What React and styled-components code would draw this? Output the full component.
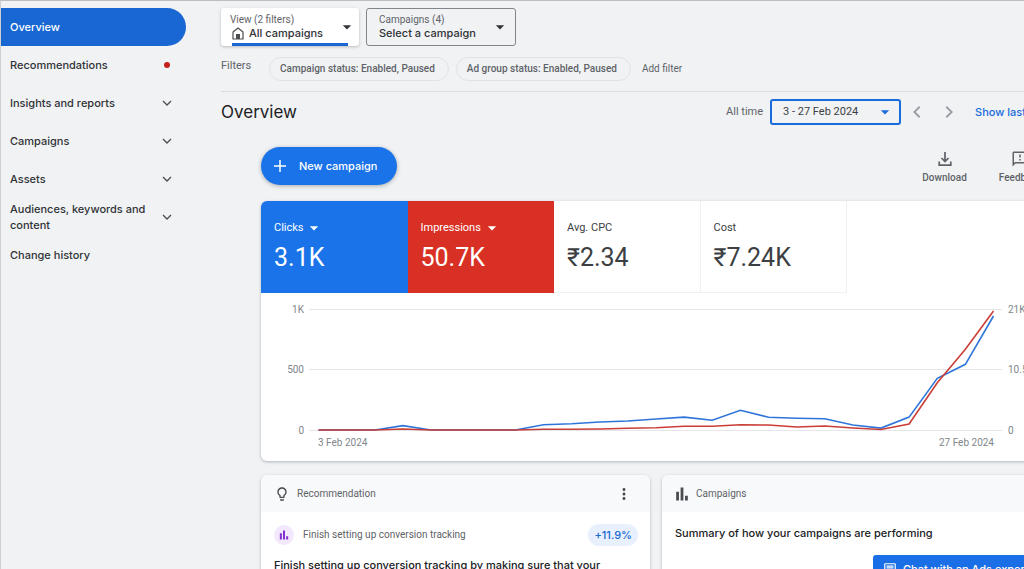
import React, { useState } from 'react';
import styled, { createGlobalStyle, css } from 'styled-components';
import {
  MdArrowDropDown,
  MdChevronLeft,
  MdChevronRight,
  MdLightbulbOutline,
  MdMoreVert,
  MdOutlineChat,
  MdOutlineFeedback,
} from 'react-icons/md';

const display = 'Inter, "Liberation Sans", sans-serif';
const text = 'Roboto, "Liberation Sans", sans-serif';

const GlobalStyle = createGlobalStyle`
  * {
    box-sizing: border-box;
  }
  body {
    margin: 0;
    background: #f0f2f4;
    color: #3c4043;
    font-family: ${text};
    font-size: 11px;
    line-height: 16px;
    overflow: hidden;
  }
  button, select {
    margin: 0;
    padding: 0;
    border: 0;
    background: none;
    color: inherit;
    font: inherit;
    text-align: left;
    appearance: none;
    cursor: pointer;
  }
  a {
    color: inherit;
    text-decoration: none;
  }
  h1, h2, p {
    margin: 0;
  }
  svg {
    display: block;
    flex: none;
  }
`;

const Page = styled.div`
  display: flex;
  height: 100vh;
  overflow: hidden;
  border-top: 1px solid #bdbec0;
  border-left: 1px solid #cfd0d2;
`;

/* Sidebar */

const Sidebar = styled.nav`
  flex: none;
  width: 220px;
  padding-top: 7px;
`;

const NavItem = styled.a`
  display: flex;
  align-items: center;
  justify-content: space-between;
  width: 185px;
  height: 38px;
  padding: 0 13px 0 9px;
  border-radius: 0 19px 19px 0;
  color: #303337;
  font-family: ${display};
  font-size: 11px;
  font-weight: 500;
  line-height: 16px;

  ${({ $active }) => $active && css`
    background: #1967d2;
    color: #fff;
  `}
`;

const NavLabel = styled.span`
  max-width: 142px;
`;

const Dot = styled.span`
  width: 6px;
  height: 6px;
  margin-right: 3px;
  border-radius: 50%;
  background: #c5221f;
`;

/* Scope pickers and filters */

const Main = styled.main`
  flex: 1;
  min-width: 0;
  margin-right: -67px;
`;

const ScopeBar = styled.div`
  display: flex;
  gap: 7px;
  padding-top: 7px;
`;

const ScopeBox = styled.div`
  display: flex;
  align-items: center;
  justify-content: space-between;
  width: ${({ $outlined }) => ($outlined ? 150 : 138)}px;
  height: 38px;
  padding: ${({ $outlined }) => ($outlined ? '0 5px 0 12px' : '0 2px 0 9px')};
  border-radius: 3px;
  color: #303337;
  ${({ $outlined }) => ($outlined
    ? css`border: 1px solid #80868b;`
    : css`
      background:
        linear-gradient(#1967d2, #1967d2) 11px 100% / 116px 3px no-repeat,
        #fff;
      box-shadow: 0 1px 3px rgba(60, 64, 67, 0.3);
    `)}
`;

const ScopeLabel = styled.label`
  display: block;
  color: #5f6368;
  font-size: 10px;
  line-height: 12px;
`;

const ScopeValue = styled.div`
  display: flex;
  align-items: center;
  gap: 5px;
  padding-left: ${({ $indent }) => ($indent ? 2 : 0)}px;
  font-family: ${display};
  font-weight: 500;
  line-height: 14px;
`;

const Filters = styled.div`
  display: flex;
  align-items: center;
  height: 46px;
  border-bottom: 1px solid #dadce0;
  color: #5f6368;
`;

const FiltersLabel = styled.span`
  width: 48px;
  padding-bottom: 6px;
`;

const Chip = styled.button`
  height: 24px;
  margin-right: 7px;
  padding: 0 13px 0 10px;
  border: 1px solid #e0e2e5;
  border-radius: 12px;
  font-size: 10px;
  font-weight: 500;
`;

const AddFilter = styled.button`
  padding-left: 4px;
  font-size: 10px;
`;

/* Heading row */

const Heading = styled.div`
  display: flex;
  align-items: center;
  justify-content: space-between;
  height: 39px;
  padding-right: 20px;
`;

const Title = styled.h1`
  color: #202124;
  font-family: ${display};
  font-size: 17px;
  font-weight: 400;
  line-height: 24px;
`;

const DateTools = styled.div`
  display: flex;
  align-items: center;
`;

const DateLabel = styled.label`
  margin-right: 7px;
  color: #5f6368;
`;

const DateBox = styled.div`
  display: flex;
  align-items: center;
  justify-content: space-between;
  width: 131px;
  height: 26px;
  margin-right: 4px;
  padding: 0 4px 0 11px;
  border: 2px solid #1a6bdc;
  border-radius: 3px;
  color: #3c4043;

  svg {
    color: #1a6bdc;
  }
`;

const Step = styled.button`
  margin-right: 8px;
  color: #9aa0a6;
`;

const ShowLast = styled.button`
  padding-left: 6px;
  color: #1a6bdc;
  font-family: ${display};
  font-weight: 500;
`;

/* Content */

const Content = styled.div`
  padding: 0 40px;
`;

const Actions = styled.div`
  display: flex;
  align-items: flex-start;
  justify-content: space-between;
  height: 70px;
  padding: 16px 9px 0 0;
`;

const NewCampaign = styled.button`
  display: flex;
  align-items: center;
  gap: 12px;
  height: 38px;
  padding: 0 20px 0 12px;
  border-radius: 19px;
  background: #1a73e8;
  box-shadow: 0 1px 4px rgba(60, 64, 67, 0.4);
  color: #fff;
  font-family: ${display};
  font-weight: 500;
`;

const Tools = styled.div`
  display: flex;
  gap: 32px;
`;

const Tool = styled.button`
  display: flex;
  flex-direction: column;
  align-items: center;
  gap: 2px;
  padding-top: 3px;
  color: #5f6368;
  font-size: 10px;
  font-weight: 500;
`;

const Card = styled.section`
  overflow: hidden;
  border-radius: 6px;
  background: #fff;
  box-shadow: 0 1px 3px rgba(60, 64, 67, 0.35);
`;

const Metrics = styled.div`
  display: grid;
  grid-template-columns: repeat(4, 1fr);
  max-width: 586px;
`;

const Metric = styled.div`
  height: 92px;
  padding: 19px 12px 0 13px;
  background: ${({ $fill }) => $fill || '#fff'};
  color: ${({ $fill }) => ($fill ? '#fff' : '#3c4043')};
  ${({ $fill }) => !$fill && css`
    border-right: 1px solid #eff0f1;
    border-bottom: 1px solid #eff0f1;
  `}
`;

const MetricName = styled.div`
  display: flex;
  align-items: center;
  height: 16px;
`;

const MetricValue = styled.div`
  margin-top: 6px;
  font-size: 25px;
  line-height: 32px;
`;

const ChartSvg = styled.svg`
  width: 100%;
  height: auto;
  font-family: ${text};
  font-size: 10px;
  fill: #80868b;
`;

const Cards = styled.div`
  display: grid;
  grid-template-columns: 1fr 1fr;
  gap: 12px;
  padding-top: 14px;
`;

const CardHead = styled.header`
  display: flex;
  align-items: center;
  gap: 7px;
  height: 37px;
  padding: 0 17px 0 13px;
  background: #f8f9fa;
  color: #4a4e52;
`;

const CardTitle = styled.h2`
  flex: 1;
  color: #5f6368;
  font-size: 10px;
  font-weight: 400;
`;

const CardBody = styled.div`
  height: 120px;
  padding: 12px 12px 0 13px;
`;

const Hint = styled.div`
  display: flex;
  align-items: center;
  gap: 9px;
  color: #5f6368;
  font-size: 10px;
`;

const HintIcon = styled.span`
  display: grid;
  place-items: center;
  width: 20px;
  height: 20px;
  border-radius: 50%;
  background: #f3e8fd;
  color: #8430ce;
`;

const HintText = styled.span`
  flex: 1;
`;

const Score = styled.span`
  padding: 3px 6px;
  border-radius: 11px;
  background: #e8f0fe;
  color: #1967d2;
  font-family: ${display};
  font-size: 11px;
  font-weight: 500;
`;

const Lead = styled.p`
  padding-top: ${({ $spaced }) => ($spaced ? 10 : 0)}px;
  color: #202124;
  font-family: ${display};
  font-weight: 500;
  line-height: 18px;
`;

const ChatButton = styled.button`
  position: fixed;
  right: -36px;
  bottom: -14px;
  display: flex;
  align-items: center;
  gap: 6px;
  width: 187px;
  height: 28px;
  padding: 0 10px;
  border-radius: 3px;
  background: #1a6fe6;
  color: #fff;
  font-family: ${display};
  font-weight: 500;
`;

/* Icons */

const Chevron = () => (
  <svg width="12" height="12" viewBox="0 0 12 12" fill="none" stroke="#4a4e52" strokeWidth="1.3">
    <path d="M2 4l4 4 4-4" />
  </svg>
);

const HomeIcon = () => (
  <svg width="12" height="13" viewBox="0 0 12 13" fill="none" stroke="#4a4e52" strokeWidth="1.2">
    <path d="M1 12V5l5-4 5 4v7z" strokeLinejoin="round" />
    <path d="M4 12V7h4v5z" fill="#4a4e52" stroke="none" />
  </svg>
);

const PlusIcon = () => (
  <svg width="14" height="14" viewBox="0 0 14 14" stroke="#fff" strokeWidth="1.5">
    <path d="M7 1v12M1 7h12" />
  </svg>
);

const DownloadIcon = () => (
  <svg width="18" height="18" viewBox="0 0 18 18" fill="none" stroke="currentColor" strokeWidth="1.7">
    <path d="M9 2v9.5M5.5 8L9 11.5 12.5 8M3.2 11.5v3.7h11.6v-3.7" />
  </svg>
);

const BarsIcon = ({ size }) => (
  <svg width={size} height={size} viewBox="0 0 12 12" fill="currentColor">
    <path d="M1 4h2.4v7.5H1zM4.8.5h2.4v11H4.8zM8.6 7.5H11v4H8.6z" />
  </svg>
);

/* Chart */

const clicks = [
  0, 0, 0, 36, 0, 0, 0, 0, 44, 52, 66, 74, 91, 107, 80, 163, 105, 97, 93, 41, 16, 107, 427, 543, 942,
];
const impressions = [
  0, 0, 0, 170, 0, 0, 0, 0, 120, 140, 170, 300, 400, 640, 660, 920, 870, 520, 690, 350, 90, 1040,
  8210, 14010, 20650,
];

const toPoints = (values, max) => values
  .map((value, i) => `${(57.5 + i * 28.125).toFixed(1)},${(137 - (value / max) * 121).toFixed(1)}`)
  .join(' ');

const axis = [
  { y: 16, left: '1K', right: '21K' },
  { y: 76, left: '500', right: '10.5K' },
  { y: 137, left: '0', right: '0' },
];

const Chart = () => (
  <ChartSvg viewBox="0 0 790 168" role="img" aria-label="Clicks and impressions, 3 to 27 Feb 2024">
    {axis.map(({ y, left, right }) => (
      <g key={y}>
        <path d={`M48 ${y}.5H741`} stroke="#e4e6e8" />
        <text x="43" y={y + 4} textAnchor="end">{left}</text>
        <text x="747" y={y + 4}>{right}</text>
      </g>
    ))}
    <text x="57" y="153">3 Feb 2024</text>
    <text x="733" y="153" textAnchor="end">27 Feb 2024</text>
    <polyline points={toPoints(clicks, 1000)} fill="none" stroke="#2f75d9" strokeWidth="1.6" />
    <polyline points={toPoints(impressions, 21000)} fill="none" stroke="#c93f37" strokeWidth="1.6" />
  </ChartSvg>
);

const navItems = [
  { label: 'Overview', active: true },
  { label: 'Recommendations', dot: true },
  { label: 'Insights and reports', expands: true },
  { label: 'Campaigns', expands: true },
  { label: 'Assets', expands: true },
  { label: 'Audiences, keywords and content', expands: true },
  { label: 'Change history' },
];

const metrics = [
  { name: 'Clicks', value: '3.1K', fill: '#1a73e8' },
  { name: 'Impressions', value: '50.7K', fill: '#d93025' },
  { name: 'Avg. CPC', value: '₹2.34' },
  { name: 'Cost', value: '₹7.24K' },
];

const App = () => {
  const [range, setRange] = useState('3 - 27 Feb 2024');

  return (
    <>
      <GlobalStyle />
      <Page>
        <Sidebar>
          {navItems.map(({ label, active, dot, expands }) => (
            <NavItem
              key={label}
              as={expands ? 'button' : 'a'}
              href={expands ? undefined : '#'}
              aria-expanded={expands ? false : undefined}
              $active={active}
            >
              <NavLabel>{label}</NavLabel>
              {dot && <Dot />}
              {expands && <Chevron />}
            </NavItem>
          ))}
        </Sidebar>

        <Main>
          <ScopeBar>
            <ScopeBox>
              <div>
                <ScopeLabel htmlFor="view">View (2 filters)</ScopeLabel>
                <ScopeValue $indent>
                  <HomeIcon />
                  <select id="view">
                    <option>All campaigns</option>
                  </select>
                </ScopeValue>
              </div>
              <MdArrowDropDown size={20} />
            </ScopeBox>
            <ScopeBox $outlined>
              <div>
                <ScopeLabel htmlFor="campaign">Campaigns (4)</ScopeLabel>
                <ScopeValue>
                  <select id="campaign">
                    <option>Select a campaign</option>
                  </select>
                </ScopeValue>
              </div>
              <MdArrowDropDown size={20} />
            </ScopeBox>
          </ScopeBar>

          <Filters>
            <FiltersLabel>Filters</FiltersLabel>
            <Chip>Campaign status: Enabled, Paused</Chip>
            <Chip>Ad group status: Enabled, Paused</Chip>
            <AddFilter>Add filter</AddFilter>
          </Filters>

          <Heading>
            <Title>Overview</Title>
            <DateTools>
              <DateLabel htmlFor="range">All time</DateLabel>
              <DateBox>
                <select id="range" value={range} onChange={(e) => setRange(e.target.value)}>
                  <option>3 - 27 Feb 2024</option>
                </select>
                <MdArrowDropDown size={20} />
              </DateBox>
              <Step aria-label="Previous period"><MdChevronLeft size={24} /></Step>
              <Step aria-label="Next period"><MdChevronRight size={24} /></Step>
              <ShowLast>Show last 30 days</ShowLast>
            </DateTools>
          </Heading>

          <Content>
            <Actions>
              <NewCampaign>
                <PlusIcon />
                New campaign
              </NewCampaign>
              <Tools>
                <Tool>
                  <DownloadIcon />
                  Download
                </Tool>
                <Tool>
                  <MdOutlineFeedback size={18} />
                  Feedback
                </Tool>
              </Tools>
            </Actions>

            <Card>
              <Metrics>
                {metrics.map(({ name, value, fill }) => (
                  <Metric key={name} $fill={fill}>
                    <MetricName>
                      {fill ? (
                        <>
                          <select aria-label="Metric">
                            <option>{name}</option>
                          </select>
                          <MdArrowDropDown size={20} />
                        </>
                      ) : name}
                    </MetricName>
                    <MetricValue>{value}</MetricValue>
                  </Metric>
                ))}
              </Metrics>
              <Chart />
            </Card>

            <Cards>
              <Card>
                <CardHead>
                  <MdLightbulbOutline size={16} />
                  <CardTitle>Recommendation</CardTitle>
                  <button aria-label="More options"><MdMoreVert size={18} /></button>
                </CardHead>
                <CardBody>
                  <Hint>
                    <HintIcon><BarsIcon size={10} /></HintIcon>
                    <HintText>Finish setting up conversion tracking</HintText>
                    <Score>+11.9%</Score>
                  </Hint>
                  <Lead $spaced>
                    Finish setting up conversion tracking by making sure that your
                  </Lead>
                </CardBody>
              </Card>
              <Card>
                <CardHead>
                  <BarsIcon size={14} />
                  <CardTitle>Campaigns</CardTitle>
                </CardHead>
                <CardBody>
                  <Lead>Summary of how your campaigns are performing</Lead>
                </CardBody>
              </Card>
            </Cards>
          </Content>
        </Main>
      </Page>
      <ChatButton>
        <MdOutlineChat size={14} />
        Chat with an Ads expert
      </ChatButton>
    </>
  );
};

export default App;
